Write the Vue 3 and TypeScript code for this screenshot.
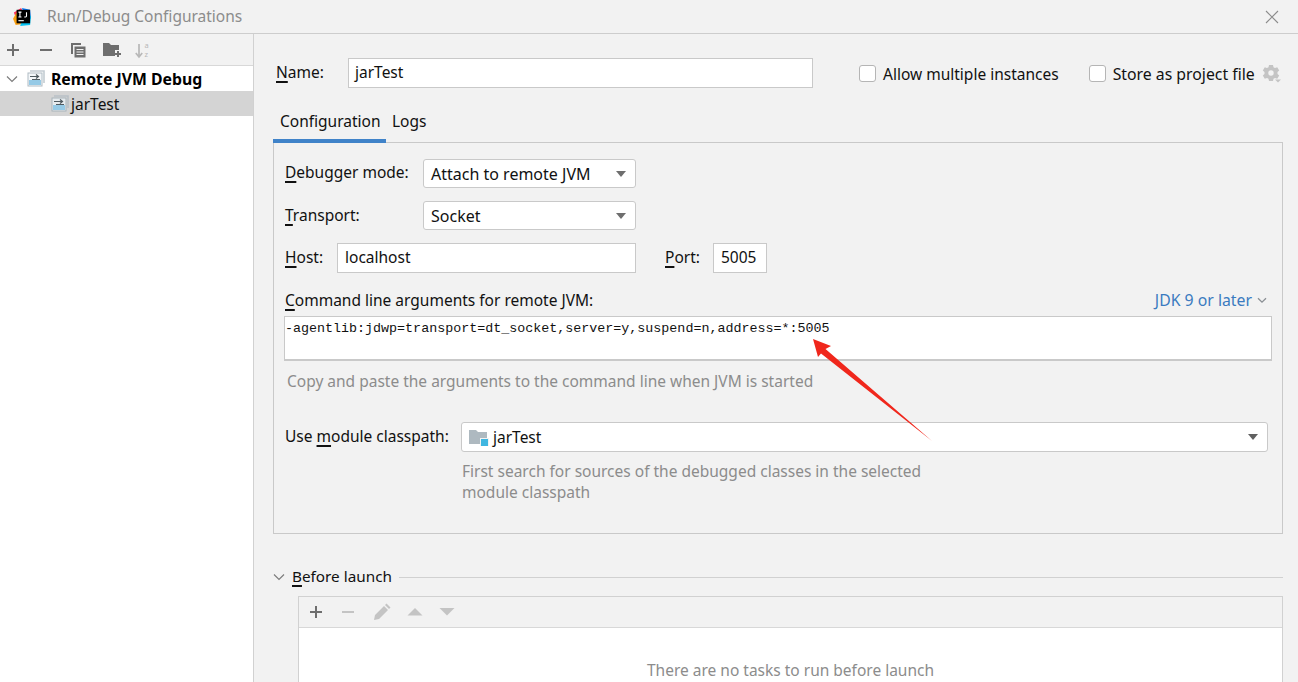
<script setup lang="ts">
const moduleHint: string[] = [
  'First search for sources of the debugged classes in the selected',
  'module classpath',
]
</script>

<template>
  <div class="window">
    <header class="titlebar">
      <svg class="logo" width="18" height="18" viewBox="0 0 20 20">
        <path d="M1 5 L9 0 L12 6 L4 13Z" fill="#fe315d" />
        <path d="M0 12 L5 3 L9 18 L3 19Z" fill="#f9a012" />
        <path d="M10 0 L19 2 L20 12 L13 9Z" fill="#087cfa" />
        <path d="M8 20 L19 19 L20 9 L12 8Z" fill="#07c3f2" />
        <rect x="4" y="2" width="15" height="15" fill="#000" />
        <rect x="6" y="13.5" width="6" height="1.200" fill="#fff" />
        <path d="M6 4.600h3.400M7.700 4.600v5.400M6 10h3.400M15 4.600v4.400q0 1-1 1h-1.500" fill="none" stroke="#fff" stroke-width="1.200" />
      </svg>
      <span class="title">Run/Debug Configurations</span>
      <svg class="close" width="14" height="14" viewBox="0 0 14 14">
        <path d="M1 1 L13 13 M13 1 L1 13" stroke="#8c8c8c" stroke-width="1.1" fill="none" />
      </svg>
    </header>

    <div class="content">
      <aside class="sidebar">
        <div class="side-tools">
          <svg width="14" height="14" viewBox="0 0 14 14"><path d="M7 1v12M1 7h12" stroke="#6e6e6e" stroke-width="2" /></svg>
          <svg class="tool-minus" width="14" height="14" viewBox="0 0 14 14"><path d="M1 7h12" stroke="#6e6e6e" stroke-width="2" /></svg>
          <svg width="16" height="16" viewBox="0 0 16 16">
            <path d="M1 1h10v2H3v9H1z" fill="#6e6e6e" />
            <path d="M4.500 4.500h11v11h-11z" fill="#6e6e6e" />
            <path d="M6.500 7.500h7M6.500 10h7M6.500 12.500h7" stroke="#f2f2f2" stroke-width="1" />
          </svg>
          <svg width="19" height="16" viewBox="0 0 19 16">
            <path d="M0 1h6l2 2h8v5h-4v6H0z" fill="#6e6e6e" />
            <path d="M15 9v6M12 12h6" stroke="#6e6e6e" stroke-width="2" />
          </svg>
          <svg class="sort" width="18" height="20" viewBox="0 0 18 20">
            <path d="M5 4v13M1.800 13 5 17l3.200-4" stroke="#b8b8b8" stroke-width="1.700" fill="none" />
            <text x="10.500" y="7.500" class="sort-letter">a</text>
            <text x="10.500" y="17" class="sort-letter">z</text>
          </svg>
        </div>
        <div class="tree">
          <div class="tree-row">
            <svg class="twisty" width="12" height="8" viewBox="0 0 12 8"><path d="M1 1.500 6 6.500l5-5" stroke="#7d7d7d" stroke-width="1.200" fill="none" /></svg>
            <svg class="run-icon" width="18" height="17" viewBox="0 0 18 17">
              <path d="M3 1h14v12" fill="none" stroke="#c3ccd2" stroke-width="1.600" />
              <rect x="1" y="3" width="14" height="13" fill="#f4f7f9" stroke="#b0bcc4" />
              <rect x="2" y="10" width="12" height="5" fill="#96cae6" />
              <path d="M3 6.500h8M9 4.500l2.500 2-2.500 2M13 9.500H5" stroke="#4f5a60" stroke-width="1.200" fill="none" />
            </svg>
            <b class="root-label">Remote JVM Debug</b>
          </div>
          <div class="tree-row selected">
            <svg class="run-icon" width="18" height="17" viewBox="0 0 18 17">
              <path d="M3 1h14v12" fill="none" stroke="#b8c0c6" stroke-width="1.600" />
              <rect x="1" y="3" width="14" height="13" fill="#e6ebee" stroke="#a8b3ba" />
              <rect x="2" y="10" width="12" height="5" fill="#96cae6" />
              <path d="M3 6.500h8M9 4.500l2.500 2-2.500 2M13 9.500H5" stroke="#4f5a60" stroke-width="1.200" fill="none" />
            </svg>
            <span>jarTest</span>
          </div>
        </div>
      </aside>

      <main class="main">
        <div class="name-row">
          <label class="name-label"><u>N</u>ame:</label>
          <div class="field name-field">jarTest</div>
          <span class="check first-check"><i class="box"></i><span class="check-text">Allow multiple instances</span></span>
          <span class="check second-check"><i class="box"></i><span class="check-text store">Store as project file</span></span>
          <svg class="gear" width="19" height="19" viewBox="0 0 19 19">
            <path fill-rule="evenodd" fill="#c4c4c4" d="M7 1h4l.5 2.300 1.500.8 2.200-.9 2 3.400-1.700 1.500v1.800l1.700 1.500-2 3.400-2.200-.9-1.500.8L11 17H7l-.5-2.300-1.500-.8-2.200.9-2-3.400 1.700-1.500V8.100L.8 6.600l2-3.400 2.200.9 1.500-.8zM9 6.300a2.700 2.700 0 1 0 0 5.400 2.700 2.700 0 0 0 0-5.400z" />
            <path d="M13 15.500h6l-3 3z" fill="#c4c4c4" />
          </svg>
        </div>

        <nav class="tabs">
          <span class="tab active">Configuration</span>
          <span class="tab">Logs</span>
        </nav>

        <section class="panel">
          <div class="form-row mode-row">
            <label class="label-wide"><u>D</u>ebugger mode:</label>
            <div class="select short">Attach to remote JVM<i class="caret"></i></div>
          </div>
          <div class="form-row transport-row">
            <label class="label-wide"><u>T</u>ransport:</label>
            <div class="select short">Socket<i class="caret"></i></div>
          </div>
          <div class="form-row host-row">
            <label class="host-label"><u>H</u>ost:</label>
            <div class="field host-field">localhost</div>
            <label class="port-label"><u>P</u>ort:</label>
            <div class="field port-field">5005</div>
          </div>
          <div class="cmd-head">
            <label><u>C</u>ommand line arguments for remote JVM:</label>
            <span class="jdk">JDK 9 or later<svg width="10" height="7" viewBox="0 0 10 7"><path d="M1 1.200 5 5.200l4-4" stroke="#8a8f94" stroke-width="1.300" fill="none" /></svg></span>
          </div>
          <div class="cmd-box">-agentlib:jdwp=transport=dt_socket,server=y,suspend=n,address=*:5005</div>
          <p class="hint cmd-hint">Copy and paste the arguments to the command line when JVM is started</p>
          <div class="form-row module-row">
            <label class="module-label">Use <u>m</u>odule classpath:</label>
            <div class="select long">
              <svg class="folder" width="20" height="17" viewBox="0 0 20 17">
                <path d="M0 1h7l2 2h9v12H0z" fill="#aeb9c0" />
                <rect x="11" y="9" width="9" height="8" fill="#f2f2f2" />
                <rect x="12" y="10" width="7" height="7" fill="#40b6e0" />
              </svg>
              jarTest<i class="caret dark"></i>
            </div>
          </div>
          <p v-for="line in moduleHint" :key="line" class="hint module-hint">{{ line }}</p>
        </section>

        <div class="before-head">
          <svg width="12" height="8" viewBox="0 0 12 8"><path d="M1 1.500 6 6.500l5-5" stroke="#7d7d7d" stroke-width="1.200" fill="none" /></svg>
          <span class="before-title"><u>B</u>efore launch</span>
          <span class="before-line"></span>
        </div>
        <div class="tasks">
          <div class="task-tools">
            <svg width="14" height="14" viewBox="0 0 14 14"><path d="M7 1v12M1 7h12" stroke="#6e6e6e" stroke-width="2" /></svg>
            <svg width="14" height="14" viewBox="0 0 14 14"><path d="M1 7h12" stroke="#c4c4c4" stroke-width="2" /></svg>
            <svg class="pencil" width="18" height="18" viewBox="0 0 18 18"><path d="M1 17l1-5L11 3l4 4-9 9zM12 2l1.500-1.500 4 4L16 6z" fill="#c4c4c4" /></svg>
            <svg class="up" width="16" height="8" viewBox="0 0 16 8"><path d="M8 0l7.500 7.500H.5z" fill="#c4c4c4" /></svg>
            <svg width="16" height="8" viewBox="0 0 16 8"><path d="M.5 0h15L8 7.500z" fill="#c4c4c4" /></svg>
          </div>
          <div class="task-empty">There are no tasks to run before launch</div>
        </div>
      </main>
    </div>

    <svg class="arrow" width="130" height="110" viewBox="0 0 130 110">
      <path d="M1 1 L19 8 L13.500 11 L120 103 L9 15.500 L6 19 Z" fill="#f0271c" />
    </svg>
  </div>
</template>

<style>
html, body { margin: 0; background: #f2f2f2; }
</style>

<style scoped>
.window {
  position: relative;
  width: 1298px;
  height: 682px;
  overflow: hidden;
  background: #f2f2f2;
  color: #111;
  font: 15.500px/20px "Noto Sans", "Open Sans", sans-serif;
}
u { text-underline-offset: 3px; text-decoration-thickness: 1.500px; text-decoration-skip-ink: none; }
.titlebar {
  display: flex;
  align-items: center;
  height: 33px;
  border-bottom: 1px solid #cdcdcd;
  padding-left: 13px;
  padding-right: 19px;
}
.logo { flex: none; }
.title { margin-left: 16px; padding-bottom: 2px; color: #8c8c8c; }
.close { margin-left: auto; }
.content { display: flex; height: 648px; }
.sidebar { flex: none; width: 253px; border-right: 1px solid #d1d1d1; background: #fff; }
.side-tools {
  display: flex;
  align-items: center;
  height: 31px;
  padding-left: 6px;
  gap: 17px;
  background: #f2f2f2;
  border-bottom: 1px solid #d8d8d8;
}
.tool-minus { margin-left: 2px; }
.sort { margin-left: -5px; }
.sort-letter { font-size: 7.500px; fill: #b8b8b8; font-family: "Noto Sans", sans-serif; }
.tree-row { display: flex; align-items: center; height: 25px; }
.twisty { margin-left: 6px; margin-right: 9px; }
.root-label { margin-left: 6px; font-weight: 700; font-size: 15.800px; color: #000; white-space: nowrap; }
.selected { background: #d4d4d4; padding-left: 51px; }
.selected span { margin-left: 2px; }
.main { flex: 1; padding-left: 19px; padding-right: 15px; min-width: 0; }
.name-row { display: flex; align-items: center; margin-top: 24px; height: 30px; }
.name-label { width: 75px; padding-left: 3px; padding-bottom: 2px; box-sizing: border-box; }
.field {
  background: #fff;
  border: 1px solid #c9c9c9;
  box-sizing: border-box;
  padding-left: 6px;
  height: 30px;
  line-height: 27px;
}
.name-field { width: 465px; }
.check { display: flex; align-items: center; white-space: nowrap; }
.check-text { padding-top: 2px; }
.store { font-size: 15.800px; }
.box {
  width: 17px;
  height: 17px;
  box-sizing: border-box;
  margin-right: 7px;
  background: #fff;
  border: 1px solid #b5b5b5;
  border-radius: 3px;
}
.first-check { margin-left: 46px; }
.second-check { margin-left: 30px; }
.gear { margin-left: 7px; margin-top: 1px; }
.tabs { display: flex; height: 39px; margin-top: 16px; }
.tab { padding: 7px 6px 0; height: 28px; }
.active { width: 113px; height: 39px; box-sizing: border-box; padding-left: 7px; border-bottom: 4px solid #4083c9; white-space: nowrap; }
.panel {
  height: 392px;
  box-sizing: border-box;
  margin-top: -1px;
  border: 1px solid #c9c9c9;
  padding: 16px 10px 0 11px;
}
.form-row { display: flex; align-items: center; }
.form-row label { padding-bottom: 2px; }
.mode-row .label-wide { padding-bottom: 4px; }
.label-wide { width: 138px; flex: none; }
.select {
  position: relative;
  background: #fff;
  border: 1px solid #c9c9c9;
  border-radius: 3px;
  box-sizing: border-box;
  height: 29px;
  padding-left: 7px;
  line-height: 29px;
  display: flex;
  align-items: center;
}
.short { width: 213px; padding-top: 2px; font-size: 16px; }
.caret {
  position: absolute;
  right: 9px;
  top: 11px;
  width: 0;
  height: 0;
  border-left: 5.500px solid transparent;
  border-right: 5.500px solid transparent;
  border-top: 6px solid #6e6e6e;
}
.dark { border-top-color: #606060; }
.transport-row { margin-top: 13px; }
.host-row { margin-top: 13px; }
.host-label { width: 52px; flex: none; }
.host-field { width: 299px; padding-left: 7px; }
.port-label { width: 48px; flex: none; margin-left: 29px; }
.port-field { width: 54px; padding-left: 7px; }
.cmd-head { display: flex; justify-content: space-between; margin-top: 17px; padding-right: 5px; height: 20px; }
.jdk { color: #3a7bc0; white-space: nowrap; font-size: 15.800px; }
.jdk svg { margin-left: 5px; vertical-align: 2px; }
.cmd-box {
  width: 988px;
  height: 45px;
  margin-top: 6px;
  margin-left: -1px;
  box-sizing: border-box;
  background: #fff;
  border: 1px solid #c9c9c9;
  border-bottom-width: 2px;
  font: 13.350px/23px "Liberation Mono", monospace;
  color: #111;
  white-space: nowrap;
}
.hint { margin: 0; color: #8c8c8c; }
.cmd-hint { margin-top: 10px; padding-left: 2px; }
.module-row { margin-top: 31px; }
.module-label { width: 176px; flex: none; }
.long { width: 807px; height: 30px; padding-left: 7px; }
.folder { margin-right: 4px; }
.module-hint { padding-left: 177px; line-height: 21px; }
.module-row + .module-hint { margin-top: 9px; }
.before-head { display: flex; align-items: center; height: 20px; margin-top: 33px; }
.before-title { margin-left: 7px; padding-bottom: 2px; white-space: nowrap; font-size: 15.300px; }
.before-line { flex: 1; height: 1px; background: #d1d1d1; margin-left: 7px; }
.tasks {
  margin-top: 9px;
  margin-left: 25px;
  height: 120px;
  border: 1px solid #d1d1d1;
  border-bottom: 0;
  background: #fff;
}
.task-tools {
  display: flex;
  align-items: center;
  gap: 18px;
  height: 30px;
  padding-left: 10px;
  background: #f2f2f2;
  border-bottom: 1px solid #d8d8d8;
}
.pencil, .up { margin-right: -2px; }
.task-empty { text-align: center; color: #8c8c8c; padding-top: 32px; }
.arrow { position: absolute; left: 812px; top: 338px; }
</style>
